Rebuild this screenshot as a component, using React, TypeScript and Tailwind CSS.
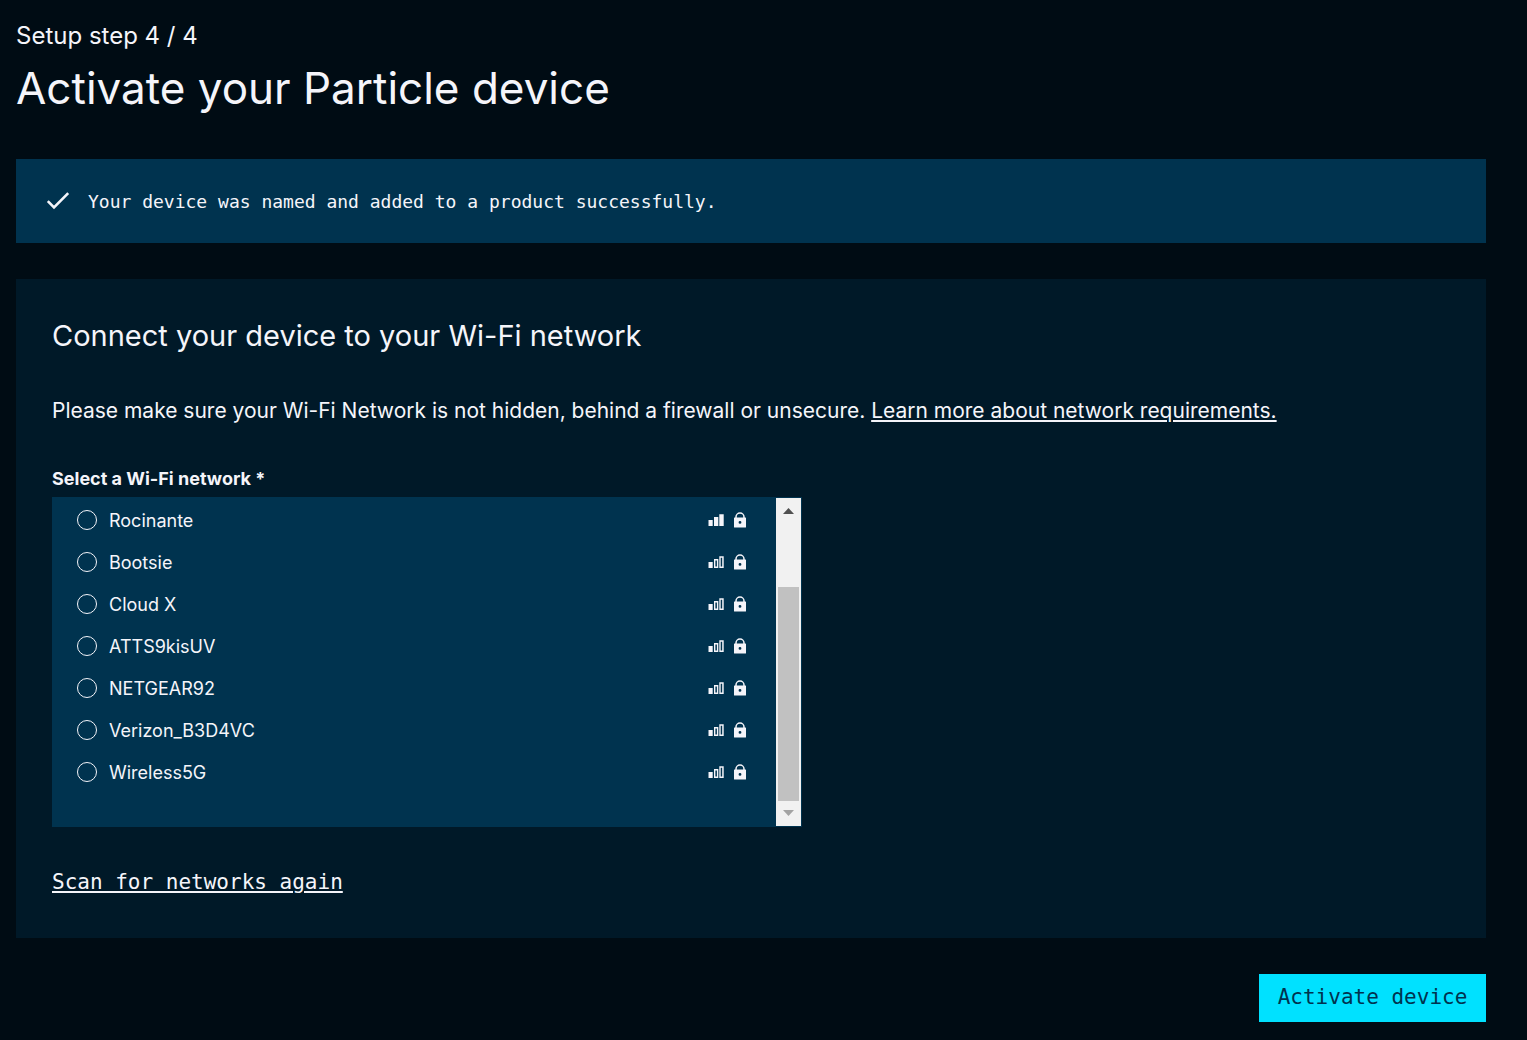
const networks = [
  { name: 'Rocinante', strong: true },
  { name: 'Bootsie', strong: false },
  { name: 'Cloud X', strong: false },
  { name: 'ATTS9kisUV', strong: false },
  { name: 'NETGEAR92', strong: false },
  { name: 'Verizon_B3D4VC', strong: false },
  { name: 'Wireless5G', strong: false },
];

function CheckIcon() {
  return (
    <svg className="h-6 w-6 shrink-0" viewBox="0 0 24 24" fill="none" stroke="currentColor" strokeWidth="2.600" aria-hidden="true">
      <path d="M1.800 12.200 8 18.400 22.200 4.200" />
    </svg>
  );
}

function SignalIcon({ strong }: { strong: boolean }) {
  return (
    <svg className="h-4 w-4" viewBox="0 0 16 16" fill="currentColor" aria-hidden="true">
      <path d="M.5 8h4.200v6H.5z" />
      {strong ? (
        <path d="M6 5h4.300v9H6zM11.300 2.300h4.400V14h-4.400z" />
      ) : (
        <path fillRule="evenodd" d="M6 5h4.300v9H6zM7.400 6.400v6.200h1.500V6.400zM11.300 2.300h4.400V14h-4.400zM12.700 3.700v8.900h1.500V3.700z" />
      )}
    </svg>
  );
}

function LockIcon() {
  return (
    <svg className="h-4 w-4" viewBox="0 0 16 16" aria-hidden="true">
      <path d="M4 6V5a4 3.900 0 0 1 8 0v1" fill="none" stroke="currentColor" strokeWidth="1.500" />
      <path fillRule="evenodd" fill="currentColor" d="M2.500 5.400h11a.5.5 0 0 1 .5.5v9a.5.5 0 0 1-.5.5h-11a.5.500 0 0 1-.5-.5v-9a.5.500 0 0 1 .5-.5zM8 9a1.400 1.400 0 1 0 0 2.800A1.400 1.400 0 0 0 8 9z" />
    </svg>
  );
}

function ScrollRail() {
  return (
    <div className="my-px mr-px flex w-[25px] shrink-0 flex-col items-center bg-[#f1f1f1]" aria-hidden="true">
      <svg className="h-[25px] w-[25px]" viewBox="0 0 25 25" fill="#505050">
        <path d="M7 16h11l-5.500-6z" />
      </svg>
      <div className="mt-16 w-[21px] flex-1 bg-[#c1c1c1]" />
      <svg className="h-[25px] w-[25px]" viewBox="0 0 25 25" fill="#a3a3a3">
        <path d="M7 9h11l-5.500 6z" />
      </svg>
    </div>
  );
}

export default function App() {
  return (
    <main className="min-h-screen bg-[#000c14] pt-4 pr-[41px] pb-[18px] pl-4 font-['Inter',sans-serif] text-[#f5f5fa]">
      <header>
        <p className="text-[24px] leading-10">Setup step 4 / 4</p>
        <h1 className="text-[44px] leading-[64px]">Activate your Particle device</h1>
      </header>

      <div role="status" className="mt-[39px] flex h-[84px] items-center gap-[18px] bg-[#00334f] px-[30px] font-['DejaVu_Sans_Mono',monospace] text-[18px]">
        <CheckIcon />
        <p>Your device was named and added to a product successfully.</p>
      </div>

      <section className="mt-9 bg-[#001928] px-9 pt-9 pb-[38px]">
        <h2 className="text-[29px] leading-[42px]">Connect your device to your Wi-Fi network</h2>
        <p className="mt-9 text-[21px] leading-9">
          Please make sure your Wi-Fi Network is not hidden, behind a firewall or unsecure.{' '}
          <a href="#requirements" className="underline decoration-2 underline-offset-2">Learn more about network requirements.</a>
        </p>

        <fieldset className="mt-8 w-[750px] max-w-full">
          <legend className="text-[18px] leading-9 font-bold">Select a Wi-Fi network *</legend>
          <div className="flex h-[330px] bg-[#00334f]">
            <div className="flex-1 pt-[2px] pr-7 pl-[25px]">
              {networks.map((network) => (
                <label key={network.name} className="flex h-[42px] items-center text-[18px]">
                  <input type="radio" name="network" className="mr-3 h-5 w-5 shrink-0 appearance-none rounded-full border border-[#f5f5fa] checked:bg-[#00e1ff]" />
                  <span className="flex-1">{network.name}</span>
                  <span className="flex gap-2">
                    <SignalIcon strong={network.strong} />
                    <LockIcon />
                  </span>
                </label>
              ))}
            </div>
            <ScrollRail />
          </div>
        </fieldset>

        <button type="button" className="mt-[37px] block font-['DejaVu_Sans_Mono',monospace] text-[21px] leading-9 underline decoration-2 underline-offset-2">
          Scan for networks again
        </button>
      </section>

      <div className="mt-9 flex justify-end">
        <button type="button" className="h-12 w-[227px] bg-[#00e1ff] font-['DejaVu_Sans_Mono',monospace] text-[21px] text-[#00334f]">
          Activate device
        </button>
      </div>
    </main>
  );
}
